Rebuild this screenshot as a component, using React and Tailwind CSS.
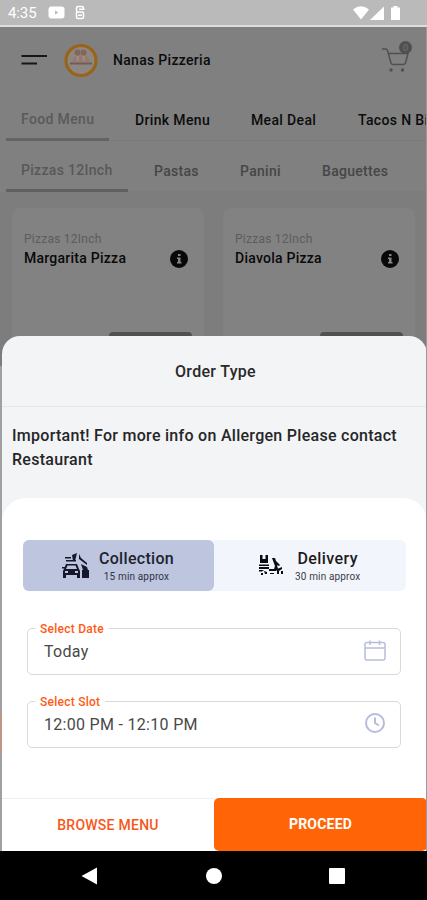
import React, { useState } from "react";

const menuTabs = [
  { name: "Food Menu", tab: "w-[103px] pl-[15px] text-[#5a5a5a]" },
  { name: "Drink Menu", tab: "w-[116px] pl-[26px] text-[#0c0c0c]" },
  { name: "Meal Deal", tab: "w-[107px] pl-[26px] text-[#0c0c0c]" },
  { name: "Tacos N Bites", tab: "w-[130px] pl-[26px] text-[#0c0c0c]" },
];

const categories = [
  { name: "Pizzas 12Inch", tab: "w-[122px] pl-[15px] text-[#585858]" },
  { name: "Pastas", tab: "w-[86px] pl-[26px] text-[#464646]" },
  { name: "Panini", tab: "w-[82px] pl-[26px] text-[#464646]" },
  { name: "Baguettes", tab: "w-[110px] pl-[26px] text-[#464646]" },
];

const pizzas = ["Margarita Pizza", "Diavola Pizza"];

function StatusBar() {
  return (
    <div className="h-[27px] shrink-0 bg-[#bababa] border-b-2 border-[#dedede] flex items-center pl-2 pr-[27px] text-white">
      <span className="text-[15px] tracking-[-0.1px] pt-px">4:35</span>
      <svg className="ml-[11px]" width="17" height="13" viewBox="0 0 17 13">
        <rect x="0.5" y="0.5" width="16" height="12" rx="3" fill="#fff" />
        <path d="M7 4.5v4l3.4-2z" fill="#bababa" />
      </svg>
      <svg className="ml-[9px]" width="12" height="15" viewBox="0 0 12 15" fill="none" stroke="#fff" strokeWidth="1.5">
        <path d="M9.500 4V3Q9.500 1.500 8 1.500H4Q2.500 1.500 2.500 3v2.500Q2.500 7 4 7h4q1.500 0 1.500 1.500V12q0 1.500-1.500 1.500H4Q2.500 13.500 2.500 12V7M5 4.200h5.500M4 10.200h4" />
      </svg>
      <svg className="ml-auto" width="47" height="16" viewBox="0 0 47 16" fill="#fff">
        <path d="M0 4.500Q8-2 16 4.500L8 14.500z" />
        <path d="M31 1.500V15H17z" />
        <path d="M38 2.500h2.500V1h4v1.500H47V15h-9z" />
      </svg>
    </div>
  );
}

function Header() {
  return (
    <div className="h-[68px] shrink-0 flex items-center pb-[2px] pl-[21px] pr-[13px]">
      <svg width="27" height="13" viewBox="0 0 27 13" stroke="#161616" strokeWidth="2.2">
        <path d="M0.500 2H26M0.500 9.500H16" />
      </svg>
      <svg className="ml-4" width="34" height="35" viewBox="0 0 34 35">
        <circle cx="17" cy="17.500" r="15" fill="#8d8683" stroke="#9a6417" strokeWidth="3.200" />
        <path d="M6 19.500h22v2H6z" fill="#6d5c56" />
        <path d="M8 19.500q1-5 4-7h10q3 2 4 7z" fill="#95786e" />
        <circle cx="13.500" cy="9.500" r="3" fill="#84655a" />
        <circle cx="19.500" cy="9.500" r="3" fill="#84655a" />
        <path d="M12.500 13h2.500v5h-2.500zM18.500 13h2.500v5h-2.500z" fill="#9c8a84" />
      </svg>
      <span className="ml-[15px] text-[14px] font-medium tracking-[0.3px] text-[#0c0c0c]">Nanas Pizzeria</span>
      <svg className="ml-auto mb-[6px]" width="31" height="34" viewBox="0 0 31 34" fill="none" stroke="#505050" strokeWidth="1.500">
        <path d="M0 9H4q1 0 1.500 1.500L9 23q.5 1.500 2 1.500h10q2 0 2.500-1.500L26 13.500H6.500" />
        <circle cx="9" cy="30" r="1.700" fill="#505050" stroke="none" />
        <circle cx="20.500" cy="30" r="1.700" fill="#505050" stroke="none" />
        <circle cx="23.500" cy="7.500" r="6.500" fill="#505050" stroke="none" />
        <text x="23.500" y="10.500" textAnchor="middle" fontSize="9" fill="#747474" stroke="none">0</text>
      </svg>
    </div>
  );
}

function PizzaCard({ name }) {
  return (
    <div className="h-[180px] w-[192px] shrink-0 rounded-lg bg-[#828282] pl-3 pr-[16px] pt-[23px]">
      <p className="text-[12px] leading-[16px] tracking-[0.25px] text-[#5c5c5c]">Pizzas 12Inch</p>
      <div className="flex items-center justify-between">
        <h3 className="text-[14px] leading-[23px] font-medium tracking-[0.25px] text-[#090909]">{name}</h3>
        <svg width="18" height="18" viewBox="0 0 18 18">
          <circle cx="9" cy="9" r="9" fill="#080808" />
          <path d="M8 4h2.500v2H8zM7 7.500h3.500V12h1v1.500H7V12h1V9H7z" fill="#858585" />
        </svg>
      </div>
      <div className="ml-auto mr-[-4px] mt-[62px] h-[30px] w-[83px] rounded bg-[#515151]" />
    </div>
  );
}

function CollectionIcon() {
  return (
    <svg width="28" height="26" viewBox="0 0 28 26" fill="#15182a">
      <path d="M3 4h6v1.500H3zM10 2l5-2-2 8h-2zM4 7h10v1.500H4zM17 1l2 4 6 5v2l-8-6z" />
      <path d="M4 11h11l2 5 1 2v7h-3v-3H4v3H1v-7l1-2zm1.500 1.500L4 16h11l-1.500-3.500zM3 18v2h3v-2zm10 0v2h3v-2z" fillRule="evenodd" />
      <path d="M20 17h7v8h-7zM19 11l6 3 1 3h-5z" />
      <path d="M0 14h3v1.500H0zM7 18h5v1.500H7z" />
    </svg>
  );
}

function DeliveryIcon() {
  return (
    <svg width="26" height="21" viewBox="0 0 26 21" fill="#0c0d12">
      <path d="M2 0h2.500v4h3V0H10v8H2zM1 9.500h10V11H1zM1 12h10v2H1z" />
      <path d="M14 3h3l1 3 4 4-1 1-2-1 1 4-2 2h-7v-2h5l1-3z" />
      <path d="M1 15h5l-2 1.500H1zM6 16l3 1v2H7zM3 18h2v2H3zM12 18h4v1h-4zM19 14l5-2v2l-3 2v3h-2zM23 16h2v3h-2z" />
    </svg>
  );
}

function Field({ label, value, children }) {
  return (
    <fieldset className="mx-[25px] mr-[26px] h-[53px] rounded-[5px] border border-[#d9d9d9] pl-[7px] pr-[14px]">
      <legend className="h-[12px] px-[5px] text-[12px] leading-[14px] font-medium tracking-[0.25px] text-[#ff5a14]">{label}</legend>
      <div className="flex h-[34px] items-center justify-between pl-[9px]">
        <span className="pt-px text-[16px] tracking-[0.3px] text-[#484848]">{value}</span>
        {children}
      </div>
    </fieldset>
  );
}

export default function App() {
  const [orderType, setOrderType] = useState("collection");

  return (
    <div className="flex h-[900px] w-[427px] flex-col overflow-hidden bg-[#808080] font-['Roboto',sans-serif]">
      <StatusBar />
      <main className="relative flex flex-1 flex-col overflow-hidden border-r border-[#999999]">
        <Header />
        <nav className="ml-[6px] flex h-[46px] shrink-0 border-b border-[#7b7b7b]">
          {menuTabs.map((t, i) => (
            <div key={t.name} className={`${t.tab} h-[46px] shrink-0 whitespace-nowrap text-[14px] font-medium tracking-[0.35px] ${i === 0 ? "border-b-[3px] border-[#646464] leading-[49px]" : "leading-[51px]"}`}>
              {t.name}
            </div>
          ))}
        </nav>
        <nav className="ml-[6px] flex h-[51px] shrink-0 border-b border-[#7d7d7d]">
          {categories.map((c, i) => (
            <div key={c.name} className={`${c.tab} h-[51px] shrink-0 whitespace-nowrap text-[14px] font-medium tracking-[0.3px] ${i === 0 ? "border-b-[3px] border-[#606060] leading-[59px]" : "leading-[61px]"}`}>
              {c.name}
            </div>
          ))}
        </nav>
        <div className="flex flex-1 gap-[19px] overflow-hidden bg-[#7d7d7d] pl-3 pt-[16px]">
          {pizzas.map((p) => <PizzaCard key={p} name={p} />)}
        </div>

        {/* sliver of the page left of the sheet */}
        <div className="absolute bottom-0 left-0 h-[485px] w-[2px] bg-[#a0a0a3] pt-[346px]">
          <div className="h-[42px] bg-[#bd9488]" />
        </div>

        <div className="absolute bottom-0 left-[2px] right-[-1px] flex h-[515px] flex-col overflow-hidden rounded-t-[18px] bg-[#f3f4f6]">
          <h2 className="h-[71px] shrink-0 border-b border-[#e4e6e8] pl-[2px] text-center text-[16px] leading-[71px] font-medium tracking-[0.3px] text-[#292929]">
            Order Type
          </h2>
          <p className="h-[91px] shrink-0 pl-[10px] pt-[17px] text-[16px] leading-[24px] font-medium tracking-[0.28px] text-[#252628]">
            Important! For more info on Allergen Please contact<br />Restaurant
          </p>
          <div className="flex flex-1 flex-col rounded-t-[24px] bg-white">
            <div className="mx-[21px] mt-[42px] flex h-[51px] shrink-0 rounded-[6px] bg-[#f3f5fc]">
              <button onClick={() => setOrderType("collection")} className={`flex w-[191px] items-center rounded-[6px] pl-[39px] ${orderType === "collection" ? "bg-[#bdc5df]" : ""}`}>
                <CollectionIcon />
                <span className="ml-[9px] flex flex-col items-center pt-[2px]">
                  <span className="text-[16px] leading-[20px] font-medium tracking-[0.3px] text-[#202330]">Collection</span>
                  <span className="pt-px text-[10px] leading-[14px] tracking-[0.15px] text-[#303443]">15 min approx</span>
                </span>
              </button>
              <button onClick={() => setOrderType("delivery")} className={`flex flex-1 items-center rounded-[6px] pl-[44px] ${orderType === "delivery" ? "bg-[#bdc5df]" : ""}`}>
                <DeliveryIcon />
                <span className="ml-[11px] flex flex-col items-center pt-[2px]">
                  <span className="text-[16px] leading-[20px] font-medium tracking-[0.4px] text-[#1c1c20]">Delivery</span>
                  <span className="pt-px text-[10px] leading-[14px] tracking-[0.15px] text-[#3c3d43]">30 min approx</span>
                </span>
              </button>
            </div>
            <div className="flex flex-1 flex-col gap-[20px] pt-[31px]">
              <Field label="Select Date" value="Today">
                <svg width="22" height="22" viewBox="0 0 22 22" fill="none" stroke="#b8bddb" strokeWidth="1.500">
                  <rect x="1" y="2.500" width="20" height="17.500" rx="2" />
                  <path d="M1 8h20M6 0.500V5M15.500 0.500V5" />
                </svg>
              </Field>
              <Field label="Select Slot" value="12:00 PM - 12:10 PM">
                <svg width="22" height="22" viewBox="0 0 22 22" fill="none" stroke="#b5bcdc" strokeWidth="2">
                  <circle cx="11" cy="10" r="9" />
                  <path d="M11 4.500V10l4 2.500" />
                </svg>
              </Field>
            </div>
            <div className="flex h-[53px] shrink-0">
              <button className="w-[212px] border-t border-[#eeeff1] text-[14px] font-medium tracking-[0.25px] text-[#f8571b]">BROWSE MENU</button>
              <button className="flex-1 rounded-[5px] bg-[#ff6407] text-[14px] font-bold tracking-[0.2px] text-white">PROCEED</button>
            </div>
          </div>
        </div>
      </main>

      <div className="flex h-[49px] shrink-0 items-center bg-black pl-[81px]">
        <svg width="17" height="18" viewBox="0 0 17 18" fill="#fff"><path d="M0.500 9L16 0.500v17z" /></svg>
        <div className="ml-[108px] size-4 rounded-full bg-white" />
        <div className="ml-[107px] size-4 rounded-[1px] bg-white" />
      </div>
    </div>
  );
}
